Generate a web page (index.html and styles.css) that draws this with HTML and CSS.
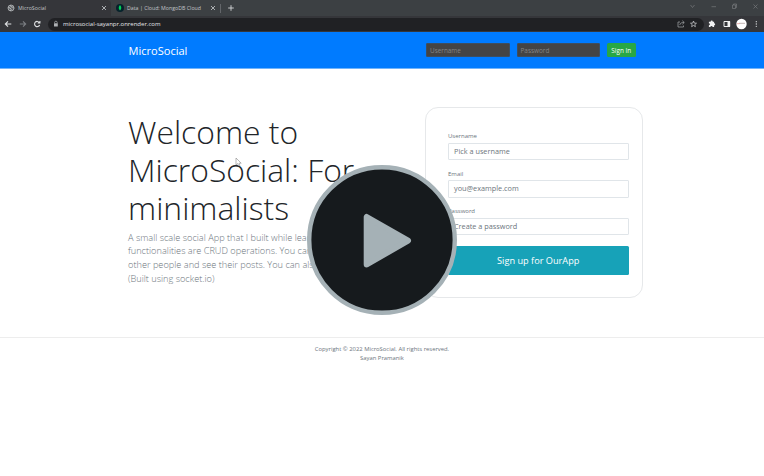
FILE: index.html
```html
<!DOCTYPE html>
<html lang="en">
<head>
<meta charset="utf-8">
<title>MicroSocial</title>
<link rel="stylesheet" href="styles.css">
</head>
<body>
<div class="tabs">
  <div class="tab active">
    <svg class="fav" viewBox="0 0 8 8"><circle cx="4" cy="4" r="3" fill="#5d6063" stroke="#b3b6b9" stroke-width=".8"/><path d="M1.2 3.2 3 4 4.2 5.4 3.3 7M3.4 1.2 4 2.8 5.7 3 6.8 4.3" fill="none" stroke="#b3b6b9" stroke-width="1"/></svg>
    <span class="tab-title">MicroSocial</span>
    <svg class="close" viewBox="0 0 6 6"><path d="M1 1 5 5M5 1 1 5" stroke="#c9cbce" stroke-width=".8"/></svg>
  </div>
  <div class="tab second">
    <svg class="fav" viewBox="0 0 8 8"><circle cx="4" cy="4" r="4" fill="#06212b"/><path d="M4 1C5.9 3 5.6 5 4 6.6 2.4 5 2.1 3 4 1Z" fill="#00d45a"/></svg>
    <span class="tab-title">Data | Cloud: MongoDB Cloud</span>
    <svg class="close" viewBox="0 0 6 6"><path d="M1 1 5 5M5 1 1 5" stroke="#c9cbce" stroke-width=".8"/></svg>
  </div>
  <svg class="plus" viewBox="0 0 8 8"><path d="M4 1.2V6.8M1.2 4H6.8" stroke="#d5d7d9" stroke-width=".9"/></svg>
  <svg class="window-controls" viewBox="0 0 76 16" fill="none" stroke="#75787b" stroke-width=".7"><path d="M2.5 5 4.5 7.5 6.5 5M23.5 6.7H28M44.5 5H47.5V8.5H44.5ZM45.5 5V4H48.5V7.5H47.5M65.5 4.5 69.5 8.5M69.5 4.5 65.5 8.5"/></svg>
</div>
<div class="toolbar">
  <svg class="nav-icons" viewBox="0 0 48 16" fill="none" stroke-width="1.1"><path d="M11.3 8H5.5M8 5.3 5.3 8 8 10.7" stroke="#dfe1e3"/><path d="M19.8 8H25.5M23 5.3 25.7 8 23 10.7" stroke="#7b7e82"/><path d="M39.3 6.5A2.6 2.6 0 1 0 39.6 9M39.9 4.9V7H37.7" stroke="#dfe1e3"/></svg>
  <div class="address">
    <svg class="lock" viewBox="0 0 6 8"><path d="M1.6 3.5V2.5A1.3 1.3 0 0 1 4.2 2.5V3.5" fill="none" stroke="#aeb1b4" stroke-width=".7"/><rect x="1" y="3.3" width="3.8" height="3.3" rx=".4" fill="#aeb1b4"/></svg>
    <span class="url">microsocial-sayanpr.onrender.com</span>
    <svg class="page-actions" viewBox="0 0 24 16" fill="none" stroke="#a3a6a9" stroke-width=".7"><path d="M4 6H2V11H7.5V9.5M3.8 9C4 7 5.5 6.500 8 6.5M6.3 4.7 8.3 6.5 6.3 8.3"/><path stroke="#d4d6d8" d="M17.5 5 18.3 7.1 20.5 7.2 18.800 8.6 19.4 10.7 17.5 9.5 15.6 10.7 16.2 8.6 14.5 7.2 16.7 7.1Z"/></svg>
  </div>
  <svg class="extensions" viewBox="0 0 60 16"><path d="M5.5 5.7H6.6A1.1 1.1 0 0 1 8.8 5.7H10.1V7.2A1.1 1.1 0 0 1 10.1 9.4V11H8.6A1.1 1.1 0 0 0 6.4 11H4.9V9.3A1 1 0 0 0 4.9 7.3V5.7Z" fill="#f1f2f3"/><path d="M20 5.5H25.7V10.5H20Z" fill="none" stroke="#f1f2f3"/><path d="M23.5 5H26V11H23.5Z" fill="#f1f2f3"/><circle cx="37.5" cy="8" r="5.2" fill="#fff"/><path d="M35 7.3H41" stroke="#988383" stroke-width=".6"/><path d="M33 7.7H35.500" stroke="#df7272" stroke-width=".6"/><g fill="#d8dadc"><circle cx="52.3" cy="5.7" r=".65"/><circle cx="52.3" cy="8" r=".65"/><circle cx="52.3" cy="10.3" r=".65"/></g></svg>
</div>
<header class="site-header">
  <div class="container header-row">
    <span class="brand">MicroSocial</span>
    <form class="login">
      <span class="login-field">Username</span>
      <span class="login-field">Password</span>
      <span class="sign-in">Sign In</span>
    </form>
  </div>
</header>
<main class="container hero">
  <section class="intro">
    <h1>Welcome to<br>MicroSocial: For<br>minimalists</h1>
    <p>A small scale social App that I built while learning. Main<br>functionalities are CRUD operations. You can follow<br>other people and see their posts. You can also chat.<br>(Built using socket.io)</p>
  </section>
  <form class="card">
    <label>Username</label>
    <div class="field">Pick a username</div>
    <label>Email</label>
    <div class="field">you@example.com</div>
    <label>Password</label>
    <div class="field">Create a password</div>
    <div class="sign-up">Sign up for OurApp</div>
  </form>
</main>
<footer>Copyright © 2022 MicroSocial. All rights reserved.<br>Sayan Pramanik</footer>
<svg class="cursor" viewBox="0 0 7 10"><path d="M1 1V8L2.7 6.5 3.8 9 5 8.5 4 6.2H6.2Z" fill="#fff" stroke="#888" stroke-width=".6"/></svg>
<svg class="play" viewBox="0 0 150 150"><circle cx="75" cy="75" r="72.8" fill="#161a1d" stroke="#a5b1b6" stroke-width="4.4"/><path d="M59.700 52V99.500L101 75.600Z" fill="#a5b1b6" stroke="#a5b1b6" stroke-width="6" stroke-linejoin="round"/></svg>
</body>
</html>
```
FILE: styles.css
```css
* { box-sizing: border-box; }
body { margin: 0; height: 476px; overflow: hidden; position: relative; background: #fff; font-family: "Open Sans", sans-serif; color: #212529; }
svg { display: block; flex: none; }
.tabs { height: 16px; display: flex; align-items: center; background: #3c4043; font-size: 5.25px; color: #c3c6c9; }
.tab { display: flex; align-items: center; height: 16px; }
.active { width: 111px; background: #35363a; padding: 0 4px 0 7px; border-radius: 0 4px 0 0; }
.second { width: 110px; padding: 0 4px 0 5px; border-right: 1px solid #63666a; height: 9px; }
.fav { width: 8px; height: 8px; margin-right: 3px; }
.tab-title { flex: 1; white-space: nowrap; }
.close { width: 6px; height: 6px; }
.plus { width: 8px; height: 8px; margin-left: 6px; }
.window-controls { width: 76px; height: 16px; margin-left: auto; }
.toolbar { height: 16px; display: flex; align-items: center; background: #35363a; }
.nav-icons { width: 48px; height: 16px; }
.address { flex: 1; height: 13px; border-radius: 7px; background: #202124; display: flex; align-items: center; padding-left: 5px; }
.lock { width: 6px; height: 8px; margin-right: 4px; }
.url { font-size: 6px; color: #e5e7e9; }
.page-actions { width: 24px; height: 16px; margin-left: auto; margin-right: 4px; }
.extensions { width: 60px; height: 16px; }
.site-header { height: 37px; background: #007bff; border-bottom: 1px solid #70b4fb; }
.container { width: 514.5px; margin-left: 128px; }
.header-row { display: flex; align-items: center; justify-content: space-between; height: 36px; padding-right: 7px; }
.brand { color: #fff; font-size: 11.05px; padding-left: .5px; }
.login { display: flex; gap: 7px; }
.login-field { width: 83.5px; height: 14px; background: #444; border: 1px solid #3e4e5f; border-radius: 1px; color: #858585; font-size: 6.4px; line-height: 13px; padding-left: 3px; }
.sign-in { width: 28.5px; height: 14px; background: #28a745; border-radius: 1.5px; color: #fff; font-size: 6.4px; line-height: 15px; text-align: center; font-weight: 500; }
.hero { height: 268px; padding-top: 38px; display: flex; justify-content: space-between; }
.intro { padding-top: 5.5px; white-space: nowrap; }
h1 { margin: 0; font-size: 31.85px; line-height: 38.2px; font-weight: 300; }
p { margin: 3.4px 0 0; color: #6c757d; font-size: 9.2px; line-height: 13.8px; font-weight: 300; }
.card { width: 217.5px; height: 191px; border: 1px solid #e6e8ea; border-radius: 13px; padding: 23px 13px 0 22px; }
label { display: block; height: 11.5px; line-height: 10px; font-size: 6px; color: #6c757d; }
.field { height: 17.5px; margin-bottom: 8.5px; border: 1px solid #e0e5e9; border-radius: 1px; line-height: 15.5px; padding-left: 5px; font-size: 7.3px; color: #6c757d; }
.sign-up { height: 29px; margin-top: 11px; border-radius: 1.5px; background: #17a2b8; color: #fff; font-size: 9.2px; line-height: 29px; text-align: center; }
footer { border-top: 1px solid #ededed; padding-top: 7px; text-align: center; color: #6c757d; font-size: 5.87px; line-height: 9px; }
.cursor { position: absolute; left: 234.5px; top: 157px; width: 7px; height: 10px; }
.play { position: absolute; left: 307px; top: 165px; width: 150px; height: 150px; }
```
